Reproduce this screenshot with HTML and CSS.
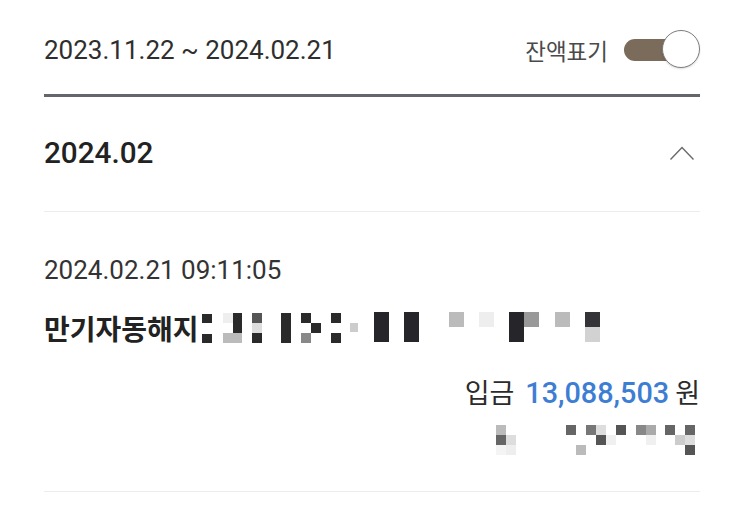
FILE: index.html
```html
<!DOCTYPE html>
<html lang="ko">
<head>
<meta charset="utf-8">
<link rel="stylesheet" href="styles.css">
</head>
<body>
<div class="page">
  <div class="header">
    <div class="range">2023.11.22 ~ 2024.02.21</div>
    <div class="balance">
      <span class="balance-label">잔액표기</span>
      <div class="toggle"><div class="knob"></div></div>
    </div>
  </div>
  <div class="rule"></div>
  <div class="month">
    <div class="month-label">2024.02</div>
    <svg class="chevron" width="26" height="16" viewBox="0 0 26 16"><path d="M1.5 14.5 L13 2.5 L24.5 14.5" fill="none" stroke="#6a6a6a" stroke-width="1.4"/></svg>
  </div>
  <div class="divider"></div>
  <div class="txn">
    <div class="txn-date">2024.02.21 09:11:05</div>
    <div class="txn-title">
      <span class="title-text">만기자동해지</span>
      <svg class="mosaic" width="400" height="32" viewBox="203 314 400 32">
        <rect x="203" y="316" width="10" height="9" fill="#2a2a2a"/>
        <rect x="203" y="336" width="10" height="9" fill="#2a2a2a"/>
        <rect x="224" y="315" width="10" height="10" fill="#eeeeee"/>
        <rect x="224" y="335" width="10" height="10" fill="#bbbbbb"/>
        <rect x="234" y="315" width="9" height="20" fill="#2a2a2a"/>
        <rect x="234" y="335" width="9" height="10" fill="#bbbbbb"/>
        <rect x="253" y="315" width="10" height="10" fill="#555555"/>
        <rect x="253" y="325" width="10" height="10" fill="#dddddd"/>
        <rect x="253" y="335" width="10" height="10" fill="#2a2a2a"/>
        <rect x="282" y="315" width="10" height="30" fill="#2a2a2a"/>
        <rect x="302" y="315" width="10" height="10" fill="#2a2a2a"/>
        <rect x="312" y="325" width="10" height="10" fill="#2a2a2a"/>
        <rect x="302" y="335" width="10" height="10" fill="#888888"/>
        <rect x="332" y="315" width="10" height="10" fill="#2a2a2a"/>
        <rect x="332" y="335" width="10" height="10" fill="#2a2a2a"/>
        <rect x="351" y="325" width="8" height="9" fill="#cccccc"/>
        <rect x="375" y="314" width="15" height="30" fill="#26262a"/>
        <rect x="405" y="314" width="15" height="30" fill="#26262a"/>
        <rect x="450" y="314" width="15" height="15" fill="#bbbbbb"/>
        <rect x="480" y="314" width="15" height="15" fill="#eeeeee"/>
        <rect x="510" y="314" width="15" height="30" fill="#26262a"/>
        <rect x="525" y="314" width="15" height="15" fill="#999999"/>
        <rect x="556" y="314" width="15" height="15" fill="#bbbbbb"/>
        <rect x="586" y="314" width="15" height="15" fill="#333338"/>
        <rect x="586" y="329" width="15" height="15" fill="#d2d2d2"/>
      </svg>
    </div>
    <div class="amount-row">
      <span class="amount-label">입금</span>
      <span class="amount">13,088,503</span>
      <span class="won">원</span>
    </div>
    <div class="balance-row">
      <svg class="mosaic2" width="200" height="30" viewBox="497 424 200 30">
        <rect x="497" y="424" width="10" height="10" fill="#bbbbbb"/>
        <rect x="497" y="434" width="10" height="10" fill="#666666"/>
        <rect x="497" y="444" width="10" height="10" fill="#f4f4f4"/>
        <rect x="507" y="434" width="10" height="10" fill="#dddddd"/>
        <rect x="507" y="444" width="10" height="10" fill="#eeeeee"/>
        <rect x="567" y="424" width="10" height="10" fill="#666666"/>
        <rect x="577" y="444" width="10" height="10" fill="#bbbbbb"/>
        <rect x="587" y="424" width="10" height="10" fill="#777777"/>
        <rect x="597" y="424" width="10" height="10" fill="#dddddd"/>
        <rect x="597" y="434" width="10" height="10" fill="#555555"/>
        <rect x="607" y="434" width="10" height="10" fill="#f0f0f0"/>
        <rect x="617" y="424" width="10" height="10" fill="#555555"/>
        <rect x="637" y="424" width="10" height="10" fill="#888888"/>
        <rect x="647" y="424" width="10" height="10" fill="#aaaaaa"/>
        <rect x="647" y="434" width="10" height="10" fill="#f0f0f0"/>
        <rect x="666" y="424" width="10" height="10" fill="#666666"/>
        <rect x="676" y="434" width="10" height="10" fill="#cccccc"/>
        <rect x="686" y="424" width="10" height="10" fill="#666666"/>
        <rect x="686" y="434" width="10" height="10" fill="#dddddd"/>
        <rect x="686" y="444" width="10" height="10" fill="#555555"/>
      </svg>
    </div>
  </div>
  <div class="divider bottom"></div>
</div>
</body>
</html>
```
FILE: styles.css
```css
html, body {
  margin: 0;
  padding: 0;
  background: #ffffff;
}
body {
  font-family: Roboto, "Noto Sans CJK KR", sans-serif;
  color: #2b2b2b;
}
.page {
  padding: 0 43px 0 44px;
}
.header {
  height: 94px;
  display: flex;
  align-items: center;
  justify-content: space-between;
  padding-top: 6px;
  box-sizing: border-box;
}
.range {
  font-size: 26px;
  color: #2e2e2e;
}
.balance {
  display: flex;
  align-items: center;
  gap: 16px;
}
.balance-label {
  font-family: "Noto Sans CJK KR", sans-serif;
  font-size: 22.5px;
  color: #4a4a4a;
}
.toggle {
  position: relative;
  width: 62px;
  height: 22px;
  border-radius: 11px;
  background: #7a6b5a;
  margin-right: 14px;
}
.knob {
  position: absolute;
  right: -14px;
  top: -9px;
  width: 36px;
  height: 36px;
  border-radius: 50%;
  background: #ffffff;
  border: 1.5px solid #7d7d7d;
  box-shadow: 0 1px 2px rgba(0,0,0,0.15);
}
.rule {
  height: 3px;
  background: #63676c;
}
.month {
  height: 114px;
  display: flex;
  align-items: center;
  justify-content: space-between;
  box-sizing: border-box;
  padding-bottom: 3px;
}
.month-label {
  font-size: 29.7px;
  font-weight: 500;
  color: #222;
}
.chevron {
  margin-right: 5px;
}
.divider {
  height: 1px;
  background: #ececec;
}
.txn {
  padding-top: 44px;
  height: 279px;
  box-sizing: border-box;
}
.txn-date {
  font-size: 26px;
  line-height: 28px;
  color: #333;
}
.txn-title {
  margin-top: 28px;
  display: flex;
  align-items: center;
  height: 32px;
}
.title-text {
  font-family: "Noto Sans CJK KR", sans-serif;
  font-size: 28px;
  font-weight: 700;
  color: #222;
  line-height: 32px;
}
.mosaic {
  display: block;
  margin-left: 3px;
}
.amount-row {
  margin-top: 28px;
  display: flex;
  justify-content: flex-end;
  align-items: baseline;
  height: 34px;
}
.amount-label, .won {
  font-family: "Noto Sans CJK KR", sans-serif;
  font-size: 27px;
  color: #2b2b2b;
}
.amount {
  font-size: 28.8px;
  font-weight: 500;
  color: #3d7ed4;
  margin: 0 6px 0 11px;
}
.balance-row {
  margin-top: 19px;
  display: flex;
  justify-content: flex-end;
  margin-right: 4px;
}
.mosaic2 {
  display: block;
}
```
